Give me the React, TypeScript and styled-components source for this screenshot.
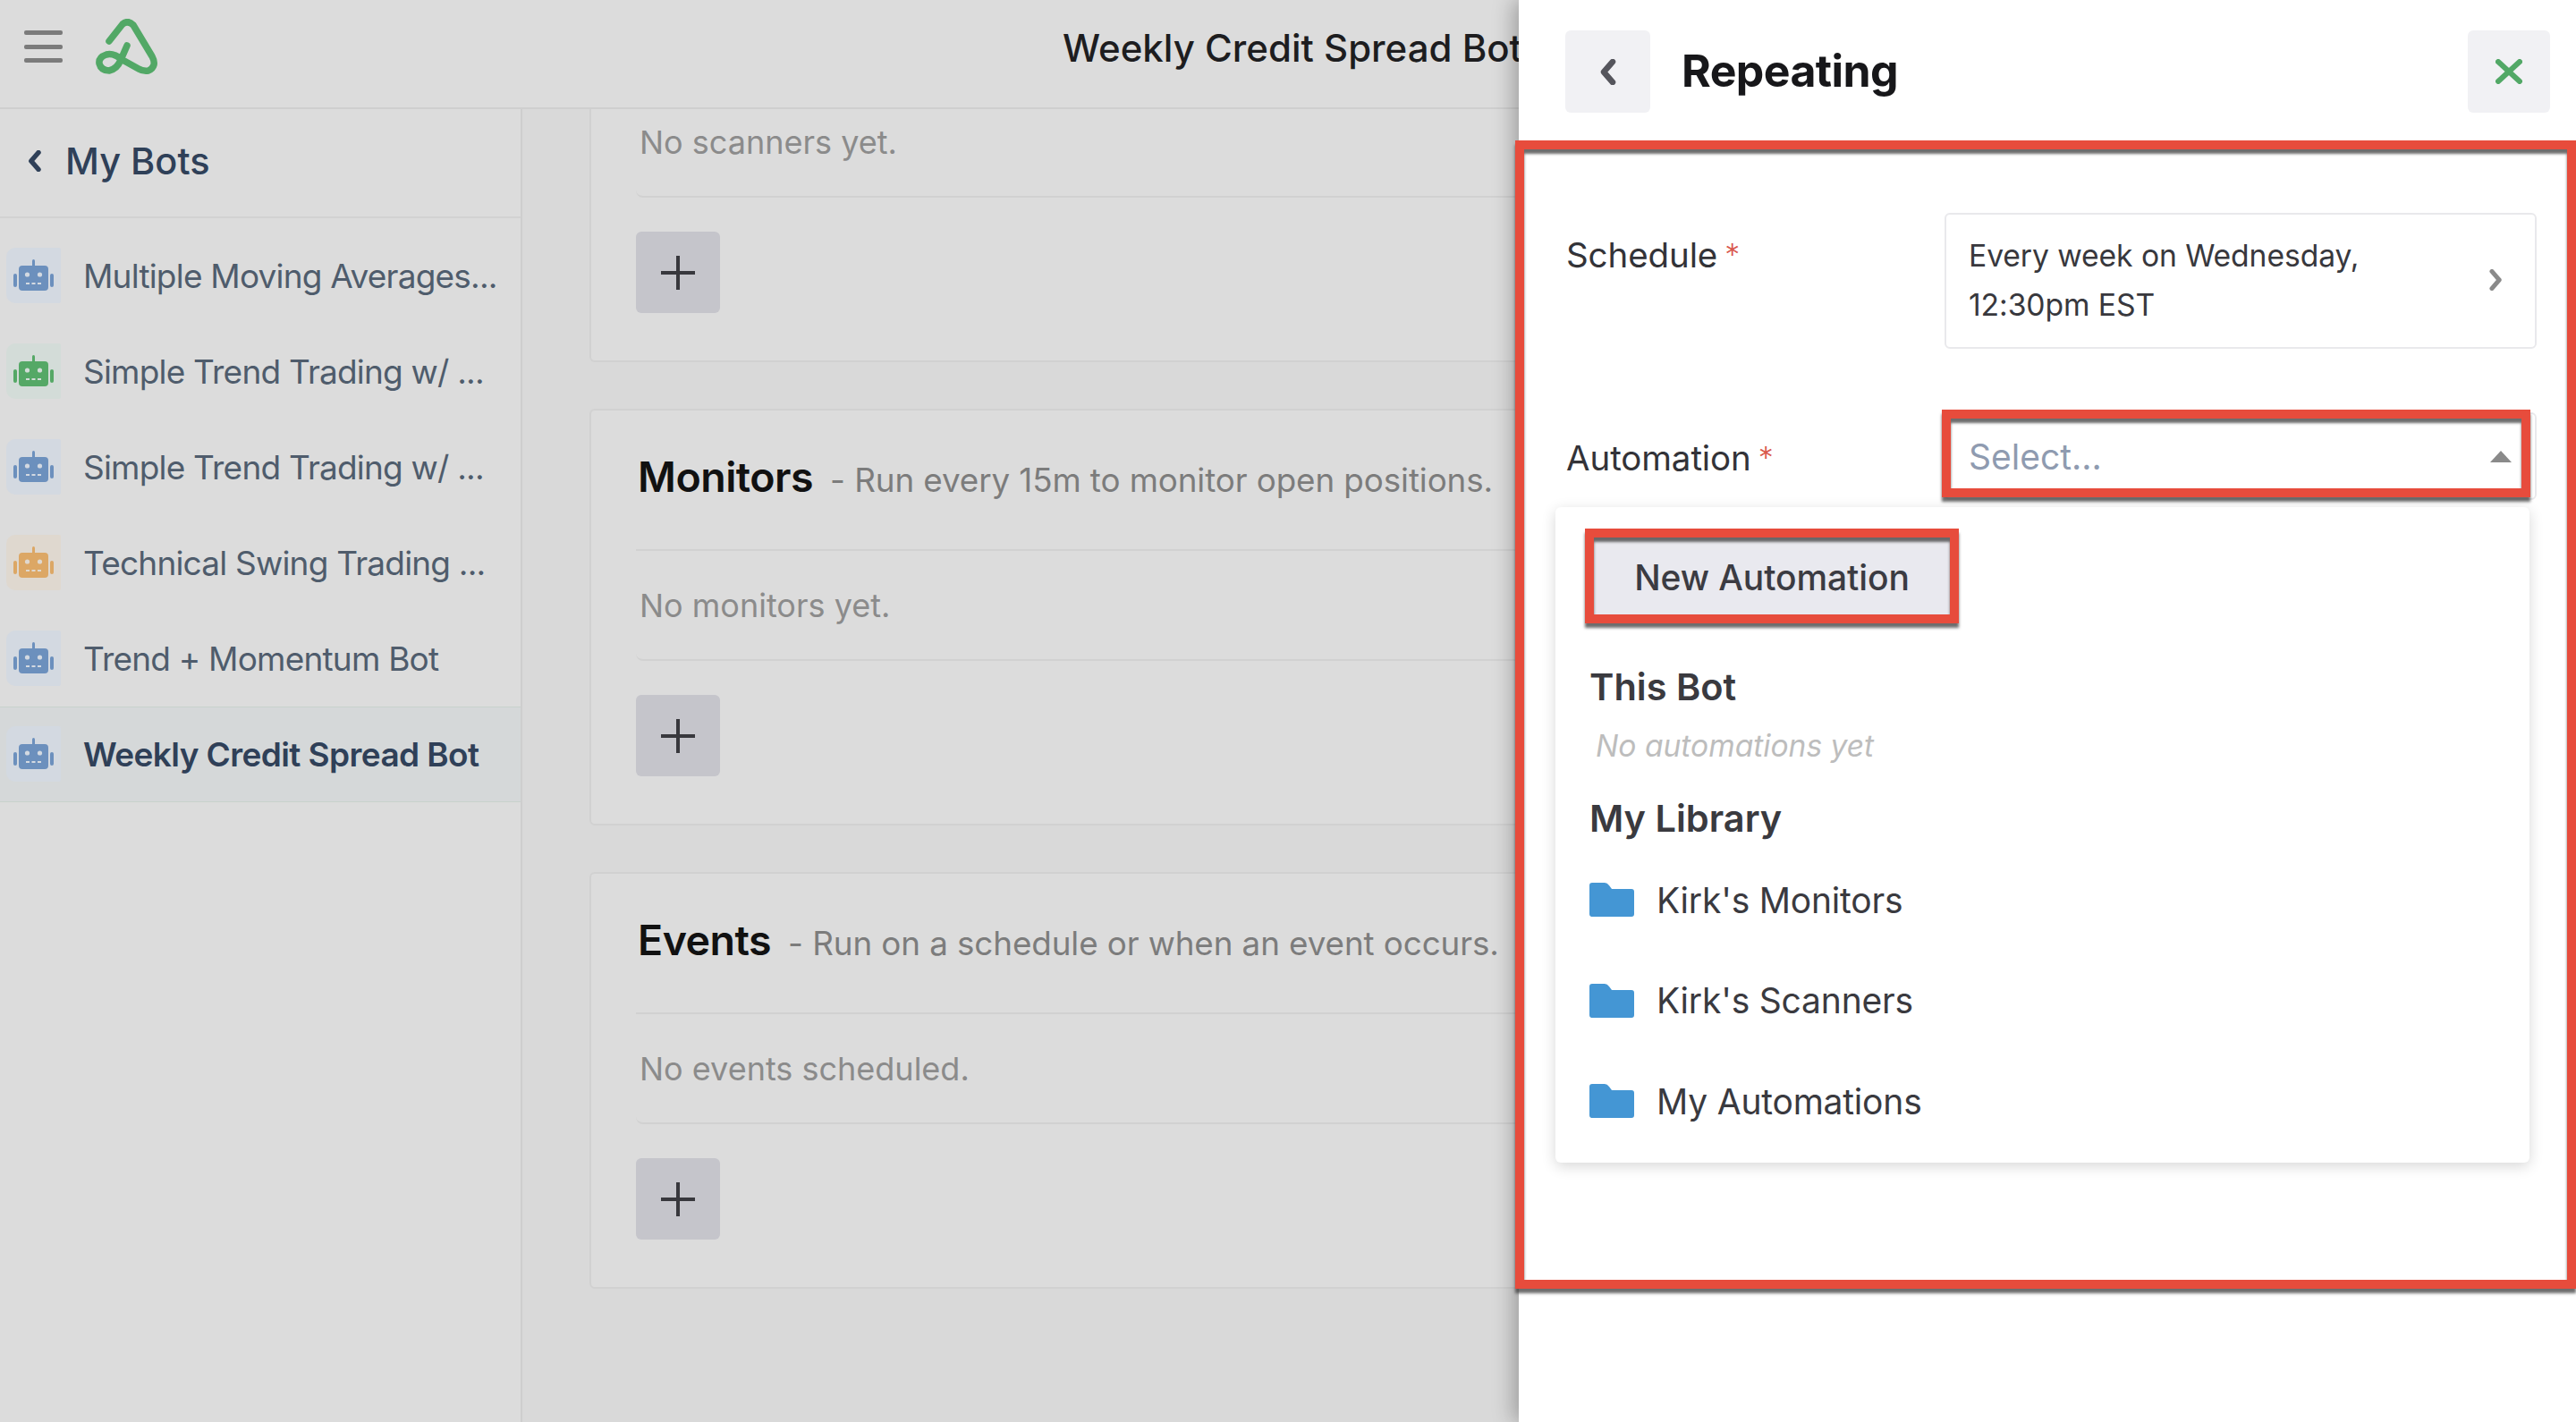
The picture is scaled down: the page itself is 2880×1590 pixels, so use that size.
import React from 'react';
import styled, { createGlobalStyle } from 'styled-components';

const GlobalStyle = createGlobalStyle`
  html, body {
    margin: 0;
    padding: 0;
    background: #dcdcdc;
  }
  * {
    box-sizing: border-box;
  }
`;

const RED = '#e74c3c';
const ANNOTATION_SHADOW = '0 5px 3px rgba(60, 60, 60, 0.75), inset 0 5px 3px rgba(60, 60, 60, 0.75)';

const Page = styled.div`
  position: relative;
  width: 2880px;
  height: 1590px;
  overflow: hidden;
  display: flex;
  flex-direction: column;
  background: #d9d9d9;
  font-family: Inter, 'Liberation Sans', sans-serif;
`;

const TopBar = styled.header`
  height: 122px;
  flex: none;
  display: flex;
  align-items: flex-start;
  background: #dcdcdc;
  border-bottom: 2px solid #cfcfcf;
  padding: 21px 0 0 27px;
`;

const Burger = styled.div`
  width: 43px;
  height: 36px;
  margin-top: 13px;
  display: flex;
  flex-direction: column;
  justify-content: space-between;

  span {
    display: block;
    height: 5px;
    border-radius: 2px;
    background: #7b7b7b;
  }
`;

const LogoMark = styled.svg`
  width: 72px;
  height: 64px;
  margin-left: 36px;
`;

const TopTitle = styled.div`
  margin-left: 1010px;
  margin-top: 11px;
  font-size: 42px;
  line-height: 44px;
  font-weight: 500;
  color: #1d1d1f;
  white-space: nowrap;
  letter-spacing: 0;
`;

const Body = styled.div`
  flex: 1;
  display: flex;
  min-height: 0;
`;

const Sidebar = styled.nav`
  width: 584px;
  flex: none;
  background: #dcdcdc;
  border-right: 2px solid #cecece;
`;

const SidebarHead = styled.div`
  height: 122px;
  display: flex;
  align-items: center;
  gap: 26px;
  padding: 0 0 5px 30px;
  border-bottom: 2px solid #d2d2d2;
  font-size: 41.5px;
  font-weight: 500;
  color: #2f4058;

  svg {
    width: 17px;
    height: 24px;
  }
`;

const BotList = styled.div`
  padding-top: 11px;
`;

const BotRow = styled.div<{ $active?: boolean }>`
  height: 107px;
  display: flex;
  align-items: center;
  padding: 0 0 1px 7px;
  gap: 25px;
  font-size: 37px;
  font-weight: ${p => (p.$active ? 600 : 400)};
  color: ${p => (p.$active ? '#2f4058' : '#4f5c6c')};
  white-space: nowrap;
  letter-spacing: ${p => (p.$active ? -0.6 : -0.8)}px;
  background: ${p => (p.$active ? '#d5d8d9' : 'transparent')};
  border-top: 1px solid ${p => (p.$active ? '#c8d2cc' : 'transparent')};
  border-bottom: 1px solid ${p => (p.$active ? '#c8d2cc' : 'transparent')};
`;

const BotTile = styled.div<{ $bg: string }>`
  width: 61px;
  height: 62px;
  flex: none;
  display: flex;
  align-items: center;
  justify-content: center;
  border-radius: 10px 2px 2px 10px;
  background: ${p => p.$bg};

  svg {
    width: 45px;
    height: 36px;
  }
`;

const Main = styled.main`
  flex: 1;
  min-width: 0;
  overflow: hidden;
  padding: 0 0 0 75px;
`;

const CardStack = styled.div`
  margin-top: -24px;
  display: flex;
  flex-direction: column;
  gap: 52px;
`;

const Card = styled.section<{ $clipped?: boolean }>`
  width: 1400px;
  padding: 0 0 53px 50px;
  background: #dcdcdc;
  border: 2px solid #d1d1d1;
  border-top-width: ${p => (p.$clipped ? 0 : 2)}px;
  border-radius: 6px;
`;

const CardHead = styled.div`
  height: 157px;
  display: flex;
  align-items: baseline;
  gap: 19px;
  padding-top: 46px;
  padding-left: 2px;
  border-bottom: 2px solid #d1d1d1;
  white-space: nowrap;
`;

const CardTitle = styled.span`
  font-size: 46.5px;
  font-weight: 600;
  color: #111;
  letter-spacing: -0.5px;
`;

const CardHint = styled.span`
  font-size: 36.8px;
  color: #7c7c7c;
  letter-spacing: -0.1px;
`;

const EmptyRow = styled.div`
  height: 123px;
  display: flex;
  align-items: center;
  padding-left: 4px;
  font-size: 36px;
  color: #8b8b8b;
  border-bottom: 2px solid #d1d1d1;
  border-bottom-left-radius: 8px;
`;

const AddButton = styled.div`
  width: 94px;
  height: 91px;
  margin-top: 38px;
  display: flex;
  align-items: center;
  justify-content: center;
  border-radius: 6px;
  background: #c5c5cb;

  svg {
    width: 40px;
    height: 40px;
  }
`;

const Drawer = styled.aside`
  position: absolute;
  top: 0;
  right: 0;
  bottom: 0;
  width: 1182px;
  background: #fff;
  box-shadow: -6px 0 22px rgba(0, 0, 0, 0.28);
`;

const DrawerHead = styled.div`
  height: 157px;
  display: flex;
  align-items: flex-start;
  padding: 34px 29px 0 52px;
`;

const SquareButton = styled.div<{ $width: number }>`
  width: ${p => p.$width}px;
  height: 92px;
  flex: none;
  display: flex;
  align-items: center;
  justify-content: center;
  border-radius: 6px;
  background: #f1f1f4;
`;

const DrawerTitle = styled.h1`
  flex: 1;
  margin: 0 0 0 35px;
  height: 92px;
  line-height: 90px;
  font-size: 50px;
  font-weight: 700;
  color: #17171a;
  letter-spacing: -0.6px;
`;

const FormFrame = styled.div`
  position: relative;
  height: 1284px;
  margin-left: -4px;
  padding: 71px 34px 0 47px;
  border: 10px solid ${RED};
  box-shadow: ${ANNOTATION_SHADOW};
`;

const FormRow = styled.div<{ $top?: number }>`
  display: grid;
  grid-template-columns: 423px 1fr;
  margin-top: ${p => p.$top ?? 0}px;
`;

const FieldLabel = styled.label<{ $offset: number }>`
  padding-top: ${p => p.$offset}px;
  font-size: 38.5px;
  line-height: 44px;
  color: #333338;
  letter-spacing: -0.1px;

  em {
    font-style: normal;
    font-weight: 300;
    font-size: 34px;
    vertical-align: 2px;
    margin-left: 8px;
    color: #d9584c;
  }
`;

const ScheduleBox = styled.div`
  height: 152px;
  display: flex;
  align-items: center;
  justify-content: space-between;
  padding: 0 34px 2px 25px;
  border: 2px solid #e9e9ec;
  border-radius: 6px;
  font-size: 33.7px;
  line-height: 55px;
  color: #38383d;
  letter-spacing: -0.1px;

  svg {
    width: 19px;
    height: 24px;
  }
`;

const SelectBox = styled.div`
  position: relative;
  height: 98px;
  display: flex;
  align-items: center;
  justify-content: space-between;
  padding: 0 26px 0 25px;
  border: 2px solid #e9e9ec;
  border-radius: 6px;
  font-size: 39px;
  color: #8f9bb0;

  svg {
    width: 24px;
    height: 13px;
  }
`;

const SelectHighlight = styled.div`
  position: absolute;
  top: -5px;
  left: -5px;
  right: 5px;
  bottom: 1px;
  border: 10px solid ${RED};
  box-shadow: ${ANNOTATION_SHADOW};
`;

const Menu = styled.div`
  margin: 8px 8px 0 -12px;
  height: 733px;
  padding: 24px 33px 0 33px;
  background: #fff;
  border-radius: 6px;
  box-shadow: 0 4px 16px rgba(0, 0, 0, 0.16);
`;

const NewButton = styled.div`
  display: inline-flex;
  align-items: center;
  justify-content: center;
  width: 418px;
  height: 106px;
  padding-top: 2px;
  background: #e9e9ef;
  border: 10px solid ${RED};
  box-shadow: ${ANNOTATION_SHADOW};
  font-size: 39px;
  font-weight: 500;
  color: #3b3b42;
  letter-spacing: -0.1px;
`;

const MenuHeading = styled.div<{ $top: number }>`
  margin: ${p => p.$top}px 0 0 5px;
  font-size: 41.5px;
  line-height: 44px;
  font-weight: 600;
  color: #3a3a3f;
  letter-spacing: 0;
`;

const MenuEmpty = styled.div`
  margin: 22px 0 0 12px;
  font-size: 33.6px;
  line-height: 44px;
  font-style: italic;
  color: #bdbdbd;
`;

const FolderList = styled.div`
  margin: 49px 0 0 5px;
  display: flex;
  flex-direction: column;
  gap: 72.5px;
`;

const FolderRow = styled.div`
  height: 40px;
  display: flex;
  align-items: center;
  gap: 25px;
  font-size: 39px;
  color: #3a3a3f;
  letter-spacing: -0.2px;

  svg {
    width: 50px;
    height: 38px;
  }
`;

const BLUE = { tile: '#d3d9e1', ink: '#6c90bd' };
const GREEN = { tile: '#d3dcd8', ink: '#55a866' };
const ORANGE = { tile: '#dfd8cf', ink: '#dca765' };

const bots = [
  { name: 'Multiple Moving Averages...', tone: BLUE },
  { name: 'Simple Trend Trading w/ ...', tone: GREEN },
  { name: 'Simple Trend Trading w/ ...', tone: BLUE },
  { name: 'Technical Swing Trading ...', tone: ORANGE },
  { name: 'Trend + Momentum Bot', tone: BLUE },
  { name: 'Weekly Credit Spread Bot', tone: BLUE, active: true },
];

const sections = [
  { title: 'Monitors', hint: '- Run every 15m to monitor open positions.', empty: 'No monitors yet.' },
  { title: 'Events', hint: '- Run on a schedule or when an event occurs.', empty: 'No events scheduled.' },
];

const RobotIcon = ({ color, face }: { color: string; face: string }) => (
  <svg viewBox="0 0 45 36" fill="none">
    <rect x="21" y="0" width="3" height="8" rx="1.5" fill={color} />
    <rect x="6" y="7" width="33" height="28" rx="4" fill={color} />
    <rect x="0" y="16" width="4" height="15" rx="2" fill={color} />
    <rect x="41" y="16" width="4" height="15" rx="2" fill={color} />
    <circle cx="15.5" cy="17" r="2.6" fill={face} />
    <circle cx="29.5" cy="17" r="2.6" fill={face} />
    <rect x="14" y="26" width="4" height="2" fill={face} />
    <rect x="20.5" y="26" width="4" height="2" fill={face} />
    <rect x="27" y="26" width="4" height="2" fill={face} />
  </svg>
);

const Chevron = ({ dir, color, width }: { dir: 'left' | 'right'; color: string; width: number }) => (
  <svg viewBox="0 0 19 29" fill="none">
    <path
      d={dir === 'left' ? 'M15 3 L5 14.5 L15 26' : 'M4 3 L14 14.5 L4 26'}
      stroke={color}
      strokeWidth={width}
      strokeLinecap="round"
      strokeLinejoin="round"
    />
  </svg>
);

const FolderIcon = () => (
  <svg viewBox="0 0 50 38">
    <path
      d="M3 0 H17 Q20 0 22 3 L25 7 H47 Q50 7 50 10 V35 Q50 38 47 38 H3 Q0 38 0 35 V3 Q0 0 3 0 Z"
      fill="#4496d4"
    />
  </svg>
);

const App: React.FC = () => {
  return (
    <Page>
      <GlobalStyle />
      <TopBar>
        <Burger>
          <span />
          <span />
          <span />
        </Burger>
        <LogoMark viewBox="106 20 72 64" fill="none">
          <path
            d="M122 45 L137 26 Q143 21 149 27 L170 62 Q176 73 166 78 Q160 79 155 76 L137 66 Q127 58 119 60 Q110 63 111 70 Q113 78 122 78 Q131 76 135 66 L142 50"
            stroke="#52a866"
            strokeWidth="7.5"
            strokeLinecap="round"
            strokeLinejoin="round"
          />
        </LogoMark>
        <TopTitle>Weekly Credit Spread Bot</TopTitle>
      </TopBar>

      <Body>
        <Sidebar>
          <SidebarHead>
            <Chevron dir="left" color="#2f4058" width={6.5} />
            My Bots
          </SidebarHead>
          <BotList>
            {bots.map((bot, i) => (
              <BotRow key={i} $active={bot.active}>
                <BotTile $bg={bot.tone.tile}>
                  <RobotIcon color={bot.tone.ink} face={bot.tone.tile} />
                </BotTile>
                {bot.name}
              </BotRow>
            ))}
          </BotList>
        </Sidebar>

        <Main>
          <CardStack>
            <Card $clipped>
              <EmptyRow>No scanners yet.</EmptyRow>
              <AddButton>
                <PlusGlyph />
              </AddButton>
            </Card>
            {sections.map(section => (
              <Card key={section.title}>
                <CardHead>
                  <CardTitle>{section.title}</CardTitle>
                  <CardHint>{section.hint}</CardHint>
                </CardHead>
                <EmptyRow>{section.empty}</EmptyRow>
                <AddButton>
                  <PlusGlyph />
                </AddButton>
              </Card>
            ))}
          </CardStack>
        </Main>
      </Body>

      <Drawer>
        <DrawerHead>
          <SquareButton $width={95}>
            <svg width="19" height="29" viewBox="0 0 19 29" fill="none">
              <path d="M15 3 L5 14.5 L15 26" stroke="#55555c" strokeWidth="6.5" strokeLinecap="round" strokeLinejoin="round" />
            </svg>
          </SquareButton>
          <DrawerTitle>Repeating</DrawerTitle>
          <SquareButton $width={92}>
            <svg width="30" height="28" viewBox="0 0 30 28" fill="none">
              <path d="M3 3 L27 25 M27 3 L3 25" stroke="#52a866" strokeWidth="6" strokeLinecap="round" />
            </svg>
          </SquareButton>
        </DrawerHead>

        <FormFrame>
          <FormRow>
            <FieldLabel $offset={25}>
              Schedule<em>*</em>
            </FieldLabel>
            <ScheduleBox>
              <span>
                Every week on Wednesday,
                <br />
                12:30pm EST
              </span>
              <Chevron dir="right" color="#8a8a8a" width={6} />
            </ScheduleBox>
          </FormRow>

          <FormRow $top={71}>
            <FieldLabel $offset={29}>
              Automation<em>*</em>
            </FieldLabel>
            <SelectBox>
              Select...
              <svg viewBox="0 0 24 13">
                <path d="M12 0 L24 13 H0 Z" fill="#8a8a8a" />
              </svg>
              <SelectHighlight />
            </SelectBox>
          </FormRow>

          <Menu>
            <NewButton>New Automation</NewButton>
            <MenuHeading $top={49}>This Bot</MenuHeading>
            <MenuEmpty>No automations yet</MenuEmpty>
            <MenuHeading $top={37}>My Library</MenuHeading>
            <FolderList>
              {["Kirk's Monitors", "Kirk's Scanners", 'My Automations'].map(name => (
                <FolderRow key={name}>
                  <FolderIcon />
                  {name}
                </FolderRow>
              ))}
            </FolderList>
          </Menu>
        </FormFrame>
      </Drawer>
    </Page>
  );
};

function PlusGlyph() {
  return (
    <svg viewBox="0 0 40 40" fill="none">
      <path d="M20 1 V39 M1 20 H39" stroke="#38383d" strokeWidth="4" />
    </svg>
  );
}

export default App;
